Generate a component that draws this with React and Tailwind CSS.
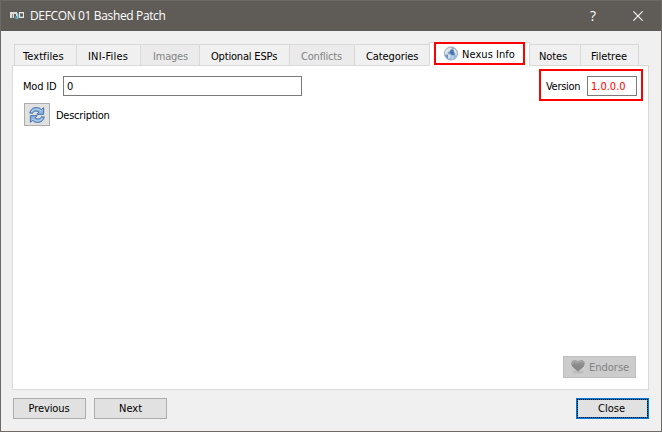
import React from "react";

const tabs = [
  { label: "Textfiles", box: "w-[62px] pl-[8px]", text: "tracking-[0.08px]" },
  { label: "INI-Files", box: "w-[64px] pl-[11px]", text: "tracking-[0.18px]" },
  { label: "Images", box: "w-[59px] pl-[12px]", text: "tracking-[-0.2px]", disabled: true },
  { label: "Optional ESPs", box: "w-[90px] pl-[11px]", text: "tracking-[-0.18px]" },
  { label: "Conflicts", box: "w-[65px] pl-[11px]", text: "tracking-[-0.2px]", disabled: true },
  { label: "Categories", box: "w-[75px] pl-[11px]", text: "tracking-[-0.1px]" },
  { label: "Nexus Info", active: true },
  { label: "Notes", box: "w-[50px] pl-[9px]", text: "tracking-[-0.1px]" },
  { label: "Filetree", box: "w-[59px] border-r pl-[10px]", text: "tracking-[-0.05px]" },
];

function AppLogo() {
  return (
    <svg width="16" height="10" viewBox="0 0 16 10" shapeRendering="crispEdges" className="block">
      <path d="M1 1H8V3H1ZM1 1H3V7H1ZM4 1H5V7H4ZM7 1H8V5H7Z" fill="#dcdcdc" />
      <path d="M10 1H15V2H10ZM10 6H15V7H10ZM10 1H11V7H10ZM14 1H15V7H14Z" fill="#e6e6e6" />
      <path d="M11 2H14V3H11ZM3 3H4V7H3ZM11 5H14V6H11Z" fill="#8f8c89" />
      <path d="M8 2H9V8H8Z" fill="#8cc8d8" />
      <path d="M6 5H8V8H6ZM9 3H10V7H9Z" fill="#5895a5" />
    </svg>
  );
}

function Globe() {
  return (
    <svg width="16" height="16" viewBox="0 0 16 16" className="block">
      <defs>
        <radialGradient id="sea" cx="0.6" cy="0.8" r="0.8">
          <stop offset="0" stopColor="#bcdcf4" />
          <stop offset="0.45" stopColor="#7ba5d2" />
          <stop offset="1" stopColor="#8ba0b7" />
        </radialGradient>
      </defs>
      <circle cx="8" cy="7.5" r="6.6" fill="url(#sea)" stroke="#9aa5b1" strokeWidth="0.8" />
      <path d="M2 6C3 3 5 1.6 8 1.5L9.5 2.5L7.5 3.5L6.5 5.5L4.5 6L5 8L7.5 9L7 11.5L5.5 13L4.5 10L2 8Z" fill="#dfe4e7" />
      <path d="M10.5 2.3L12.5 3.5L14 6.5L13.5 10L12.2 9L12.3 7L10.8 5.5Z" fill="#e1e7eb" />
      <path d="M8 4L10.3 4L10.8 6.5L11.3 9L9.5 9.3L7.5 7.8L6.8 6Z" fill="#4676aa" />
      <path d="M3.5 8L5 9L5.2 11.5L3.8 10.3Z" fill="#5d88b8" />
    </svg>
  );
}

function Refresh() {
  return (
    <svg width="16" height="16" viewBox="0 0 16 16" className="block">
      <g fill="#8cb5df" stroke="#3465a4" strokeWidth="0.9" strokeLinejoin="round">
        <path d="M.8 6.3C1.5 2 4.3.6 7.3.6C9.4.6 11.2 1.3 12.3 2.6L14.6.7V7.3H7.8L10 5.1C7.8 3.4 4.3 3.8 3.2 6.7C2.5 5.8 1.5 5.8.8 6.3Z" />
        <path d="M15.2 9.7C14.5 14 11.7 15.4 8.7 15.4C6.6 15.4 4.8 14.7 3.7 13.4L1.4 15.3V8.7H8.2L6 10.9C8.2 12.6 11.7 12.2 12.8 9.3C13.5 10.2 14.5 10.2 15.2 9.7Z" />
      </g>
      <path d="M2.3 4.8C4 2 8.8.6 12 4L13.5 2.8M13.7 11.2C12 14 7.2 15.4 4 12L2.5 13.2" fill="none" stroke="#c9def2" strokeWidth="0.7" />
    </svg>
  );
}

function Heart() {
  return (
    <svg width="16" height="16" viewBox="0 0 16 16" className="block">
      <defs>
        <linearGradient id="heart" x1="0" y1="0" x2="0" y2="1">
          <stop offset="0" stopColor="#a2a2a2" />
          <stop offset="0.5" stopColor="#8a8a8a" />
          <stop offset="1" stopColor="#858585" />
        </linearGradient>
      </defs>
      <ellipse cx="8" cy="13" rx="5.5" ry="1.8" fill="#bcbcbc" />
      <path d="M8 12.5C5 10 1.2 7.7 1.2 4.3C1.2 1.1 5.3-.3 8 2.2C10.7-.3 14.8 1.1 14.8 4.3C14.8 7.7 11 10 8 12.5Z" fill="url(#heart)" />
      <path d="M2.8 4.5C3 1.9 6 1.5 7.6 3.6C9.5 1.7 12 1.9 12.7 3.5" fill="none" stroke="#b0b0b0" strokeWidth="1" />
    </svg>
  );
}

function Tab({ tab }) {
  if (tab.active) {
    return (
      <div className="flex h-[24px] w-[101px] border-x border-t border-[#d9d9d9] bg-white pl-[4px]">
        <div className="-mt-px flex h-[23px] w-[91px] items-center border-2 border-[#ff0000] pl-[7px]">
          <Globe />
          <span className="ml-[3px] mt-[3px] tracking-[0.05px]">{tab.label}</span>
        </div>
      </div>
    );
  }
  return (
    <div
      className={`flex h-[21px] items-center border-l border-t border-[#d9d9d9] pt-[3px] ${tab.box} ${tab.text} ${
        tab.label === "Notes" ? "border-l-0" : ""
      } ${tab.disabled ? "bg-[#ebebeb] text-[#838383]" : "bg-[#f0f0f0]"}`}
    >
      {tab.label}
    </div>
  );
}

export default function App() {
  return (
    <div className="flex h-[432px] w-[662px] flex-col overflow-hidden whitespace-nowrap border border-[#6c6966] bg-[#f0f0f0] font-['DejaVu_Sans_Condensed','DejaVu_Sans',sans-serif] text-[11px] leading-[14px] text-black [font-stretch:condensed]">
      <header className="flex h-[30px] shrink-0 items-center bg-[#5f5b57] pl-[8px] text-white">
        <AppLogo />
        <h1 className="ml-[5px] font-['Open_Sans',sans-serif] text-[12px] leading-[16px] tracking-[-0.36px] [font-stretch:normal]">DEFCON 01 Bashed Patch</h1>
        <span className="ml-auto mr-[37px] font-['Open_Sans',sans-serif] text-[14px] [font-stretch:normal]">?</span>
        <svg width="10" height="10" viewBox="0 0 10 10" className="mr-[18px]">
          <path d="M.4.4L9.6 9.6M9.6.4L.4 9.6" stroke="white" strokeWidth="1.1" />
        </svg>
      </header>

      <nav className="relative z-10 -mb-px flex h-[35px] shrink-0 items-end pl-[13px]">
        {tabs.map((tab) => (
          <div key={tab.label} className={tab.active ? "" : "mb-px"}>
            <Tab tab={tab} />
          </div>
        ))}
      </nav>

      <main className="ml-[11px] flex h-[325px] w-[637px] shrink-0 flex-col border border-[#d9d9d9] bg-white">
        <div className="flex h-[37px] items-start pl-[10px] pr-[5px] pt-[3px]">
          <label className="mt-[11px] w-[40px] tracking-[-0.2px]">Mod ID</label>
          <div className="mt-[7px] flex h-[20px] w-[239px] items-center border border-[#7a7a7a] pl-[3px] pt-[2px]">0</div>
          <div className="ml-auto flex h-[32px] w-[104px] items-center border-2 border-[#ff0000] pl-[5px]">
            <span className="mt-[3px] w-[41px] tracking-[-0.3px]">Version</span>
            <div className="mt-px flex h-[20px] w-[50px] items-center border border-[#7a7a7a] pl-[3px] pt-[2px] text-[#ff0000]">1.0.0.0</div>
          </div>
        </div>
        <div className="flex items-center pl-[11px]">
          <button className="flex h-[23px] w-[26px] items-center justify-center border border-[#adadad] bg-[#e1e1e1]">
            <Refresh />
          </button>
          <span className="ml-[6px] mt-[2px] tracking-[-0.25px]">Description</span>
        </div>
        <button className="mb-[11px] ml-auto mr-[12px] mt-auto flex h-[22px] w-[73px] items-center border border-[#bfbfbf] bg-[#cccccc] pl-[6px] text-[#838383]">
          <Heart />
          <span className="ml-[3px] mt-[2px]">Endorse</span>
        </button>
      </main>

      <footer className="mt-[8px] flex gap-[8px] pl-[12px] pr-[12px]">
        <button className="h-[21px] w-[73px] border border-[#adadad] bg-[#e1e1e1] pr-px pt-px tracking-[-0.1px]">Previous</button>
        <button className="h-[21px] w-[73px] border border-[#adadad] bg-[#e1e1e1] pt-px">Next</button>
        <button className="ml-auto h-[21px] w-[73px] border-2 border-[#0078d7] bg-[#e1e1e1] pr-[2px] pt-px outline-1 -outline-offset-2 outline-dotted outline-black">Close</button>
      </footer>
    </div>
  );
}
